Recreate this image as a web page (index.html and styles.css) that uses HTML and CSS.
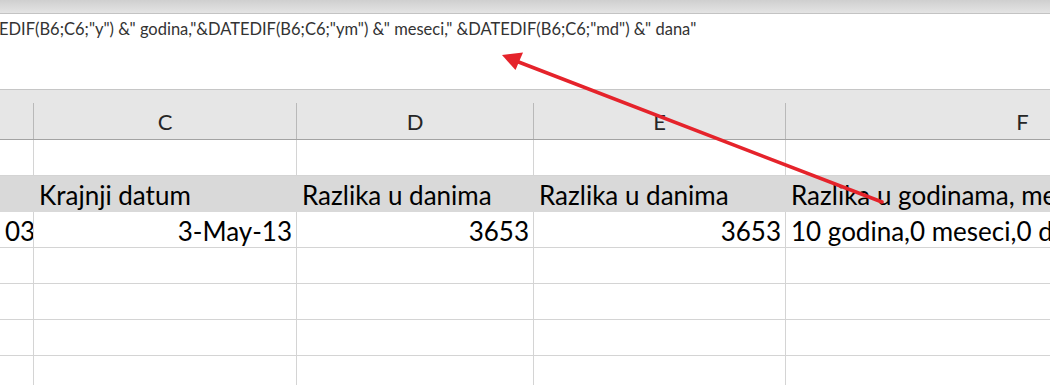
FILE: index.html
```html
<!DOCTYPE html>
<html lang="sr">
<head>
<meta charset="utf-8">
<title>DATEDIF</title>
<link rel="stylesheet" href="styles.css">
</head>
<body>
<div class="app">
  <div class="ribbon-edge"></div>
  <div class="formula-bar">
    <div class="formula-text">EDIF(B6;C6;"y") &amp;" godina,"&amp;DATEDIF(B6;C6;"ym") &amp;" meseci," &amp;DATEDIF(B6;C6;"md") &amp;" dana"</div>
  </div>
  <div class="sheet">
    <div class="col-heads">
      <div class="ch"></div>
      <div class="ch">C</div>
      <div class="ch">D</div>
      <div class="ch">E</div>
      <div class="ch">F</div>
    </div>
    <div class="row">
      <div class="cell"></div><div class="cell"></div><div class="cell"></div><div class="cell"></div><div class="cell"></div>
    </div>
    <div class="row row-fill">
      <div class="cell"></div>
      <div class="cell">Krajnji datum</div>
      <div class="cell">Razlika u danima</div>
      <div class="cell">Razlika u danima</div>
      <div class="cell">Razlika u godinama, meseci i danima</div>
    </div>
    <div class="row">
      <div class="cell num">03</div>
      <div class="cell num">3-May-13</div>
      <div class="cell num">3653</div>
      <div class="cell num">3653</div>
      <div class="cell">10 godina,0 meseci,0 dana</div>
    </div>
    <div class="row">
      <div class="cell"></div><div class="cell"></div><div class="cell"></div><div class="cell"></div><div class="cell"></div>
    </div>
    <div class="row">
      <div class="cell"></div><div class="cell"></div><div class="cell"></div><div class="cell"></div><div class="cell"></div>
    </div>
    <div class="row">
      <div class="cell"></div><div class="cell"></div><div class="cell"></div><div class="cell"></div><div class="cell"></div>
    </div>
    <div class="row">
      <div class="cell"></div><div class="cell"></div><div class="cell"></div><div class="cell"></div><div class="cell"></div>
    </div>
  </div>
  <svg class="arrow" width="1050" height="385" viewBox="0 0 1050 385" aria-hidden="true">
    <line x1="882" y1="202" x2="516" y2="61" stroke="#e5232b" stroke-width="3.5" stroke-linecap="round"/>
    <polygon points="502,55 523,52.5 515.5,70" fill="#e5232b"/>
  </svg>
</div>
</body>
</html>
```

FILE: styles.css
```css
* { box-sizing: border-box; }

html, body {
  margin: 0;
  padding: 0;
  background: #ffffff;
}

.app {
  position: relative;
  width: 1050px;
  height: 385px;
  overflow: hidden;
  font-family: Lato, "Open Sans", sans-serif;
  color: #000;
}

.ribbon-edge {
  height: 14px;
  background: linear-gradient(#cfcfcf, #e4e4e4);
  border-bottom: 1px solid #c3c3c3;
}

.formula-bar {
  height: 76px;
  background: #ffffff;
  border-bottom: 1px solid #c6c6c6;
  overflow: hidden;
  padding-top: 5px;
}

.formula-text {
  margin-left: -1px;
  font-size: 16.5px;
  line-height: 21px;
  color: #333;
  white-space: nowrap;
}

.sheet {
  display: flex;
  flex-direction: column;
}

.col-heads,
.row {
  display: grid;
  grid-template-columns: 34px 263px 237px 252px 474px;
}

.col-heads {
  height: 50px;
  background: #e6e6e6;
  border-bottom: 1px solid #a3a3a3;
}

.ch {
  margin-top: 13px;
  height: 36px;
  border-right: 1px solid #b9b9b9;
  text-align: center;
  font-size: 22px;
  line-height: 37px;
  color: #262626;
}

.row {
  height: 36px;
}

.cell {
  height: 36px;
  border-right: 1px solid #d4d4d4;
  border-bottom: 1px solid #d4d4d4;
  padding: 2px 5px 0;
  font-size: 26px;
  line-height: 35px;
  white-space: nowrap;
  overflow: hidden;
}

.num {
  text-align: right;
  padding-right: 4px;
}

.row-fill {
  background: #d9d9d9;
}

.row-fill .cell {
  border-color: #d9d9d9;
  overflow: visible;
}

.arrow {
  position: absolute;
  left: 0;
  top: 0;
  pointer-events: none;
}
```
